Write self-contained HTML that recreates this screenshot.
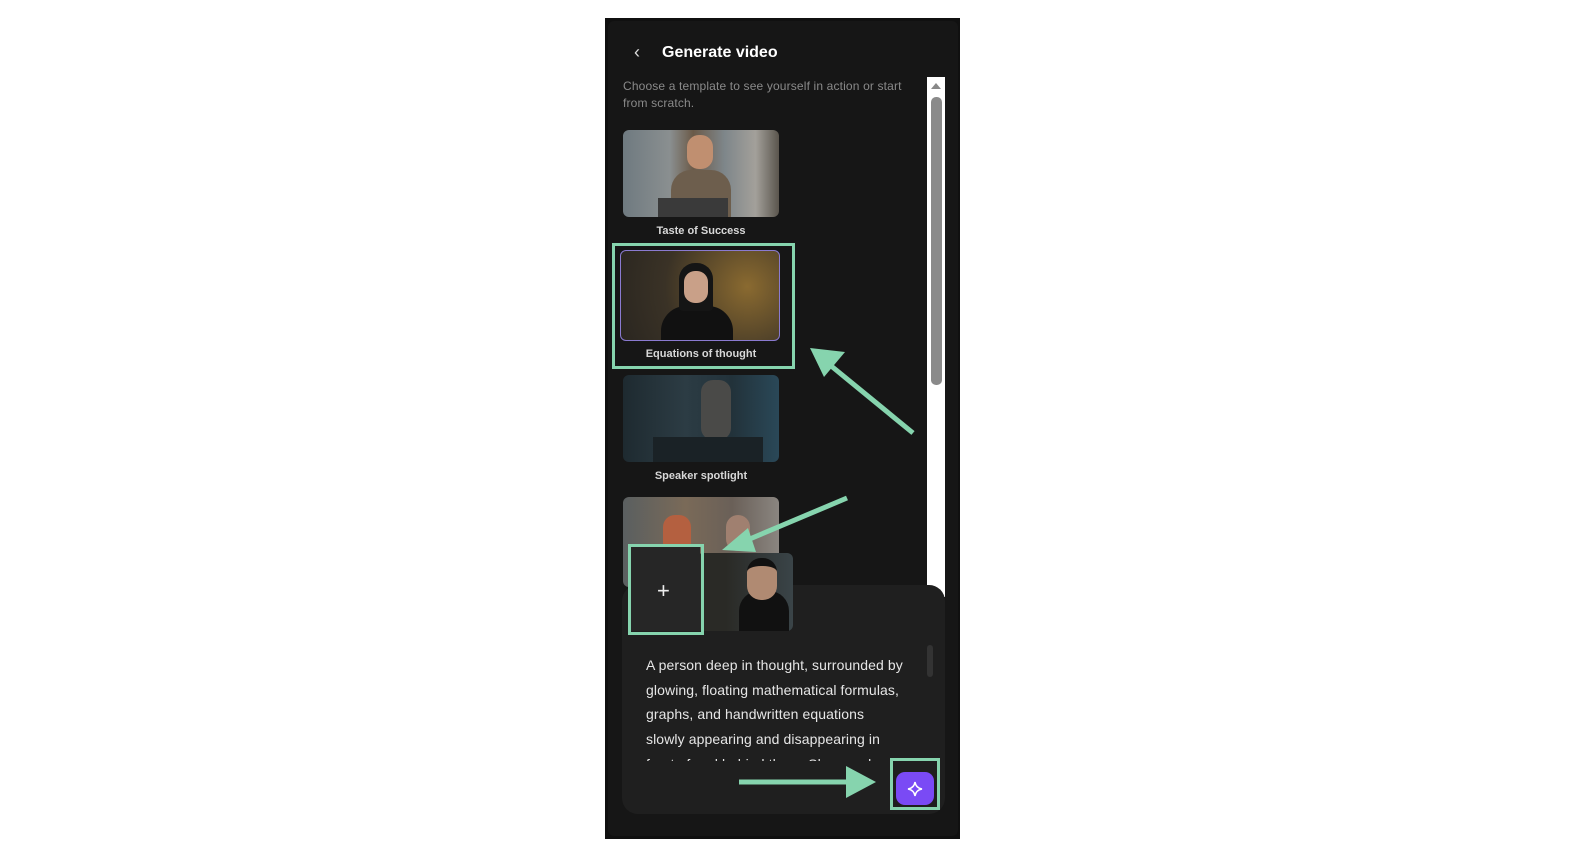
<!DOCTYPE html>
<html><head><meta charset="utf-8"><style>
*{margin:0;padding:0;box-sizing:border-box}
body{width:1574px;height:860px;background:#fff;position:relative;overflow:hidden;font-family:"Liberation Sans",sans-serif}
.abs{position:absolute}
.panel{left:605px;top:18px;width:355px;height:821px;background:#101010}
.inner{left:608px;top:21px;width:350px;height:815px;background:#161616;border-radius:6px}
.thumb{position:absolute;width:156px;height:87px;border-radius:6px;overflow:hidden}
.lbl{position:absolute;width:156px;text-align:center;color:#d8d8d8;font-size:11px;font-weight:bold}
.g{border:3px solid #86d4ae}
</style></head><body>
<div class="abs panel"></div>
<div class="abs inner"></div>
<div class="abs" style="left:634px;top:42px;color:#ddd;font-size:18px">&#8249;</div>
<div class="abs" style="left:662px;top:44px;color:#fff;font-size:16px;font-weight:bold">Generate video</div>
<div class="abs" style="left:623px;top:78px;width:305px;color:#8a8a8a;font-size:12px;line-height:17px;letter-spacing:0.15px">Choose a template to see yourself in action or start<br>from scratch.</div>
<!-- scrollbar -->
<div class="abs" style="left:927px;top:77px;width:18px;height:520px;background:#fff"></div>
<div class="abs" style="left:931px;top:83px;width:0;height:0;border-left:5px solid transparent;border-right:5px solid transparent;border-bottom:6px solid #888"></div>
<div class="abs" style="left:931px;top:97px;width:11px;height:288px;background:#8a8a8a;border-radius:5px"></div>
<!-- thumbs -->
<div class="thumb" style="left:623px;top:130px;background:linear-gradient(90deg,#6f7a80 0%,#8a8f90 30%,#6b5a48 45%,#7e868a 65%,#a3a09a 85%,#5a554d 100%)">
<div class="abs" style="left:48px;top:40px;width:60px;height:47px;background:#6d5e4d;border-radius:20px 20px 0 0"></div>
<div class="abs" style="left:64px;top:5px;width:26px;height:34px;background:#c08f70;border-radius:12px"></div>
<div class="abs" style="left:35px;top:68px;width:70px;height:20px;background:#3a3a3a"></div></div>
<div class="lbl" style="left:623px;top:225px">Taste of Success</div>
<div class="abs g" style="left:612px;top:243px;width:183px;height:126px"></div>
<div class="thumb" style="left:620px;top:250px;width:160px;height:91px;border:1.5px solid #8a7ad0;background:radial-gradient(circle at 80% 40%,#8a6a30,#3a3226 60%,#2a2620)">
<div class="abs" style="left:40px;top:55px;width:72px;height:36px;background:#111;border-radius:25px 25px 0 0"></div>
<div class="abs" style="left:58px;top:12px;width:34px;height:48px;background:#151515;border-radius:16px 16px 4px 4px"></div>
<div class="abs" style="left:63px;top:20px;width:24px;height:32px;background:#c9a088;border-radius:11px"></div></div>
<div class="lbl" style="left:623px;top:348px">Equations of thought</div>
<div class="thumb" style="left:623px;top:375px;background:linear-gradient(90deg,#1e2a30,#2c3c44 40%,#22323a 70%,#2a4858)">
<div class="abs" style="left:78px;top:5px;width:30px;height:60px;background:#4a4a48;border-radius:12px"></div>
<div class="abs" style="left:30px;top:62px;width:110px;height:25px;background:#1a2226"></div></div>
<div class="lbl" style="left:623px;top:470px">Speaker spotlight</div>
<div class="thumb" style="left:623px;top:497px;height:90px;background:linear-gradient(90deg,#5a5f60,#7a6a58 40%,#6a6058 70%,#8a8580)">
<div class="abs" style="left:40px;top:18px;width:28px;height:40px;background:#b46040;border-radius:12px"></div>
<div class="abs" style="left:103px;top:18px;width:24px;height:36px;background:#a08070;border-radius:12px"></div></div>
<!-- bottom card -->
<div class="abs" style="left:622px;top:585px;width:323px;height:229px;background:#1f1f1f;border-radius:16px"></div>
<div class="abs" style="left:697px;top:553px;width:96px;height:78px;background:linear-gradient(90deg,#2a2a26 30%,#3a4448);border-radius:6px">
<div class="abs" style="left:42px;top:38px;width:50px;height:40px;background:#111;border-radius:20px 20px 0 0"></div>
<div class="abs" style="left:50px;top:5px;width:30px;height:42px;background:#b08a72;border-radius:14px;border-top:8px solid #111"></div></div>
<div class="abs" style="left:631px;top:547px;width:69px;height:84px;background:#262626"></div>
<div class="abs g" style="left:628px;top:544px;width:76px;height:91px"></div>
<div class="abs" style="left:657px;top:578px;color:#eee;font-size:22px;font-weight:300">+</div>
<div class="abs" style="left:927px;top:645px;width:6px;height:32px;background:#333;border-radius:3px"></div>
<div class="abs" style="left:646px;top:653px;width:280px;height:108px;overflow:hidden;color:#e6e6e6;font-size:14px;line-height:24.7px;white-space:nowrap;letter-spacing:0.1px">A person deep in thought, surrounded by<br>glowing, floating mathematical formulas,<br>graphs, and handwritten equations<br>slowly appearing and disappearing in<br>front of and behind them. Shapes glow</div>
<div class="abs" style="left:896px;top:772px;width:38px;height:33px;background:#7a4af5;border-radius:9px"></div>
<svg class="abs" style="left:905px;top:779px" width="20" height="20" viewBox="0 0 20 20"><path d="M10 3 Q11 9 17 10 Q11 11 10 17 Q9 11 3 10 Q9 9 10 3Z" fill="none" stroke="#fff" stroke-width="1.5"/></svg>
<div class="abs g" style="left:890px;top:758px;width:50px;height:52px"></div>
<!-- arrows -->
<svg class="abs" style="left:0;top:0" width="1574" height="860">
<g stroke="#86d4ae" stroke-width="5" fill="#86d4ae">
<line x1="913" y1="433" x2="830" y2="365"/><polygon points="810,348 845,352 824,377" stroke="none"/>
<line x1="847" y1="498" x2="745" y2="541"/><polygon points="722,550 748,528 756,552" stroke="none"/>
<line x1="739" y1="782" x2="850" y2="782"/><polygon points="876,782 846,766 846,798" stroke="none"/>
</g></svg>
</body></html>
